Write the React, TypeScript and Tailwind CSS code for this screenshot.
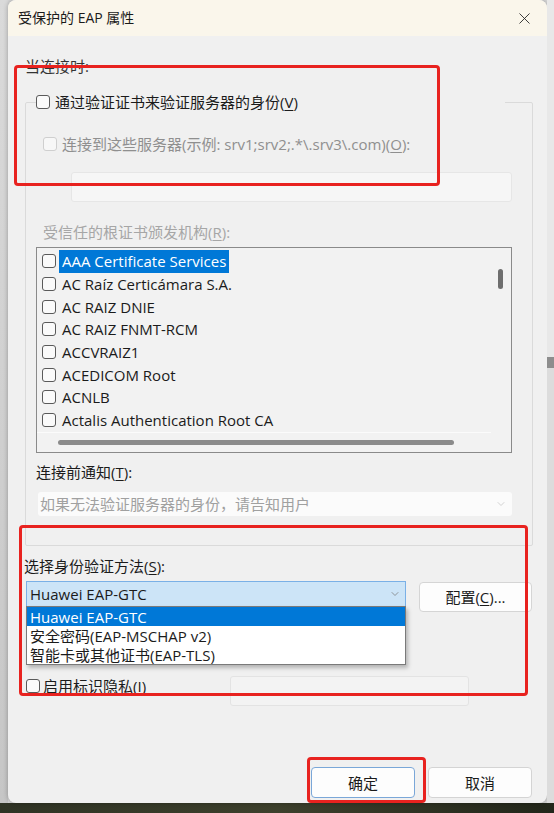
import React from 'react';
import { X, ChevronDown } from 'lucide-react';

const certs = [
  'AAA Certificate Services',
  'AC Raíz Certicámara S.A.',
  'AC RAIZ DNIE',
  'AC RAIZ FNMT-RCM',
  'ACCVRAIZ1',
  'ACEDICOM Root',
  'ACNLB',
  'Actalis Authentication Root CA',
];

const methods = ['Huawei EAP-GTC', '安全密码(EAP-MSCHAP v2)', '智能卡或其他证书(EAP-TLS)'];

const Box = ({ disabled = false }: { disabled?: boolean }) => (
  <span
    className={`inline-block w-[14px] h-[14px] shrink-0 rounded-[3px] border ${
      disabled ? 'border-[#cfcfcf] bg-[#f7f7f7]' : 'border-[#5a5a5a] bg-[#fafafa]'
    }`}
  />
);

// access key letter, underlined like in Win32 dialogs
const Key = ({ k }: { k: string }) => <span className="underline underline-offset-2">{k}</span>;

export default function App() {
  return (
    <div className="relative w-[554px] h-[813px] overflow-hidden bg-[#d7d7d7] font-['Open_Sans','Noto_Sans_CJK_SC',sans-serif] text-[15px] leading-[20px] text-[#1b1b1b]">
      <div className="flex h-[803px]">
        <div className="w-[8px] bg-gradient-to-b from-[#dadada] via-[#d0d0d0] to-[#c6c6c6]" />

        {/* Dialog */}
        <div className="w-[539px] h-[803px] rounded-[8px] bg-[#f0f0f0] shadow-[0_0_5px_rgba(0,0,0,0.3)] flex flex-col">
          {/* Title bar */}
          <div className="h-[36px] shrink-0 flex items-center justify-between pl-[10px] pr-[13px] bg-[#faf6eb] rounded-t-[8px] text-[14px] text-[#1a1a1a]">
            <span>受保护的 EAP 属性</span>
            <X size={19} strokeWidth={1.1} className="text-[#222]" />
          </div>

          {/* Body */}
          <div className="flex-1 flex flex-col pl-[17px] pr-[14px]">
            <div className="mt-[20px] text-[#333]">当连接时:</div>

            <fieldset className="mt-[16px] w-[508px] border border-[#dadada] rounded-[2px] pb-[29px]">
              <legend className="ml-[10px] w-[469px] h-[20px]">
                <div className="flex items-center gap-[5px] h-[20px]">
                  <Box />
                  <span>
                    通过验证证书来验证服务器的身份(<Key k="V" />)
                  </span>
                </div>
              </legend>

              <div className="mt-[22px] ml-[17px] flex items-center gap-[5px] text-[#8f8f8f]">
                <Box disabled />
                <span>
                  连接到这些服务器(示例: srv1;srv2;.*\.srv3\.com)(<Key k="O" />):
                </span>
              </div>

              <div className="mt-[18px] ml-[45px] w-[441px] h-[30px] bg-[#f6f6f6] border border-[#e6e6e6] rounded-[3px]" />

              <div className="mt-[20px] ml-[17px] text-[#a6a6a6]">
                受信任的根证书颁发机构(<Key k="R" />):
              </div>

              {/* Certificate list */}
              <div className="mt-[5px] ml-[10px] w-[476px] h-[206px] border border-[#8a8a8a] bg-[#f2f2f2] flex flex-col">
                <div className="h-[184px] flex">
                  <div className="w-[454px] pt-[2px] overflow-hidden">
                    {certs.map((c, i) => (
                      <div key={c} className="h-[22.7px] flex items-center pl-[5px] gap-[3px]">
                        <Box />
                        <span
                          className={`h-full flex items-center px-[3px] ${
                            i === 0 ? 'bg-[#0078d7] text-white' : ''
                          }`}
                        >
                          {c}
                        </span>
                      </div>
                    ))}
                  </div>
                  <div className="flex-1">
                    <div className="ml-[7px] mt-[21px] w-[5px] h-[20px] rounded-full bg-[#6e6e6e]" />
                  </div>
                </div>
                <div className="h-[20px] w-[454px] border-t border-[#fbfbfb]">
                  <div className="ml-[21px] mt-[7px] w-[396px] h-[5px] rounded-full bg-[#8b8b8b]" />
                </div>
              </div>

              <div className="mt-[9px] ml-[10px]">
                连接前通知(<Key k="T" />):
              </div>

              <div className="mt-[10px] ml-[12px] w-[474px] h-[24px] bg-[#fbfbfb] rounded-[3px] flex items-center justify-between pl-[2px] pr-[5px] text-[#a0a0a0]">
                <span>如果无法验证服务器的身份，请告知用户</span>
                <ChevronDown size={12} strokeWidth={1.5} className="text-[#c4c4c4]" />
              </div>
            </fieldset>

            <div className="mt-[10px] ml-[-1px]">
              选择身份验证方法(<Key k="S" />):
            </div>

            <div className="mt-[5px] flex items-start justify-between">
              <div className="relative ml-[1px] w-[380px] h-[26px] bg-[#cce4f7] border border-[#7ab0e6] flex items-center justify-between pl-[3px] pr-[4px]">
                <span>Huawei EAP-GTC</span>
                <ChevronDown size={12} strokeWidth={1.5} className="text-[#7a7a7a]" />

                {/* open dropdown */}
                <div className="absolute left-[-1px] top-full z-10 w-[380px] h-[59px] bg-white border border-[#7a7a7a] shadow-[2px_3px_4px_rgba(0,0,0,0.25)]">
                  {methods.map((m, i) => (
                    <div
                      key={m}
                      className={`h-[19px] flex items-center pl-[3px] ${
                        i === 0 ? 'bg-[#0078d7] text-white' : ''
                      }`}
                    >
                      {m}
                    </div>
                  ))}
                </div>
              </div>
              <button className="mt-[1px] mr-[1px] w-[113px] h-[30px] bg-[#fdfdfd] border border-[#d5d5d5] rounded-[4px] flex items-center justify-center">
                配置(<Key k="C" />)...
              </button>
            </div>

            <div className="mt-[64px] flex items-start">
              <div className="ml-[1px] w-[204px] h-[20px] flex items-center gap-[3px]">
                <Box />
                <span>
                  启用标识隐私(<Key k="I" />)
                </span>
              </div>
              <div className="w-[239px] h-[30px] bg-[#f3f3f3] border border-[#e3e3e3] rounded-[3px]" />
            </div>

            <div className="mt-[61px] mr-[1px] flex justify-end gap-[13px]">
              <button className="w-[104px] h-[31px] bg-[#fdfdfd] border border-[#7aa7d8] rounded-[4px]">
                确定
              </button>
              <button className="w-[104px] h-[31px] bg-[#fdfdfd] border border-[#d4d4d4] rounded-[4px]">
                取消
              </button>
            </div>
          </div>
        </div>

        <div className="flex-1 flex flex-col">
          <div className="h-[357px] bg-[#e8e8e8]" />
          <div className="h-[11px] bg-[#8d8d8d]" />
          <div className="flex-1 bg-[#dcdcdc]" />
        </div>
      </div>
      <div className="h-[10px] bg-gradient-to-r from-[#2f3324] via-[#3d402c] to-[#22261a]" />

      {/* red annotation boxes */}
      <div className="absolute z-20 left-[14px] top-[65px] w-[426px] h-[121px] border-[3px] border-[#e8221f] rounded-[4px]" />
      <div className="absolute z-20 left-[19px] top-[525px] w-[509px] h-[171px] border-[3px] border-[#e8221f] rounded-[4px]" />
      <div className="absolute z-20 left-[307px] top-[757px] w-[119px] h-[46px] border-[3px] border-[#e8221f] rounded-[4px]" />
    </div>
  );
}
